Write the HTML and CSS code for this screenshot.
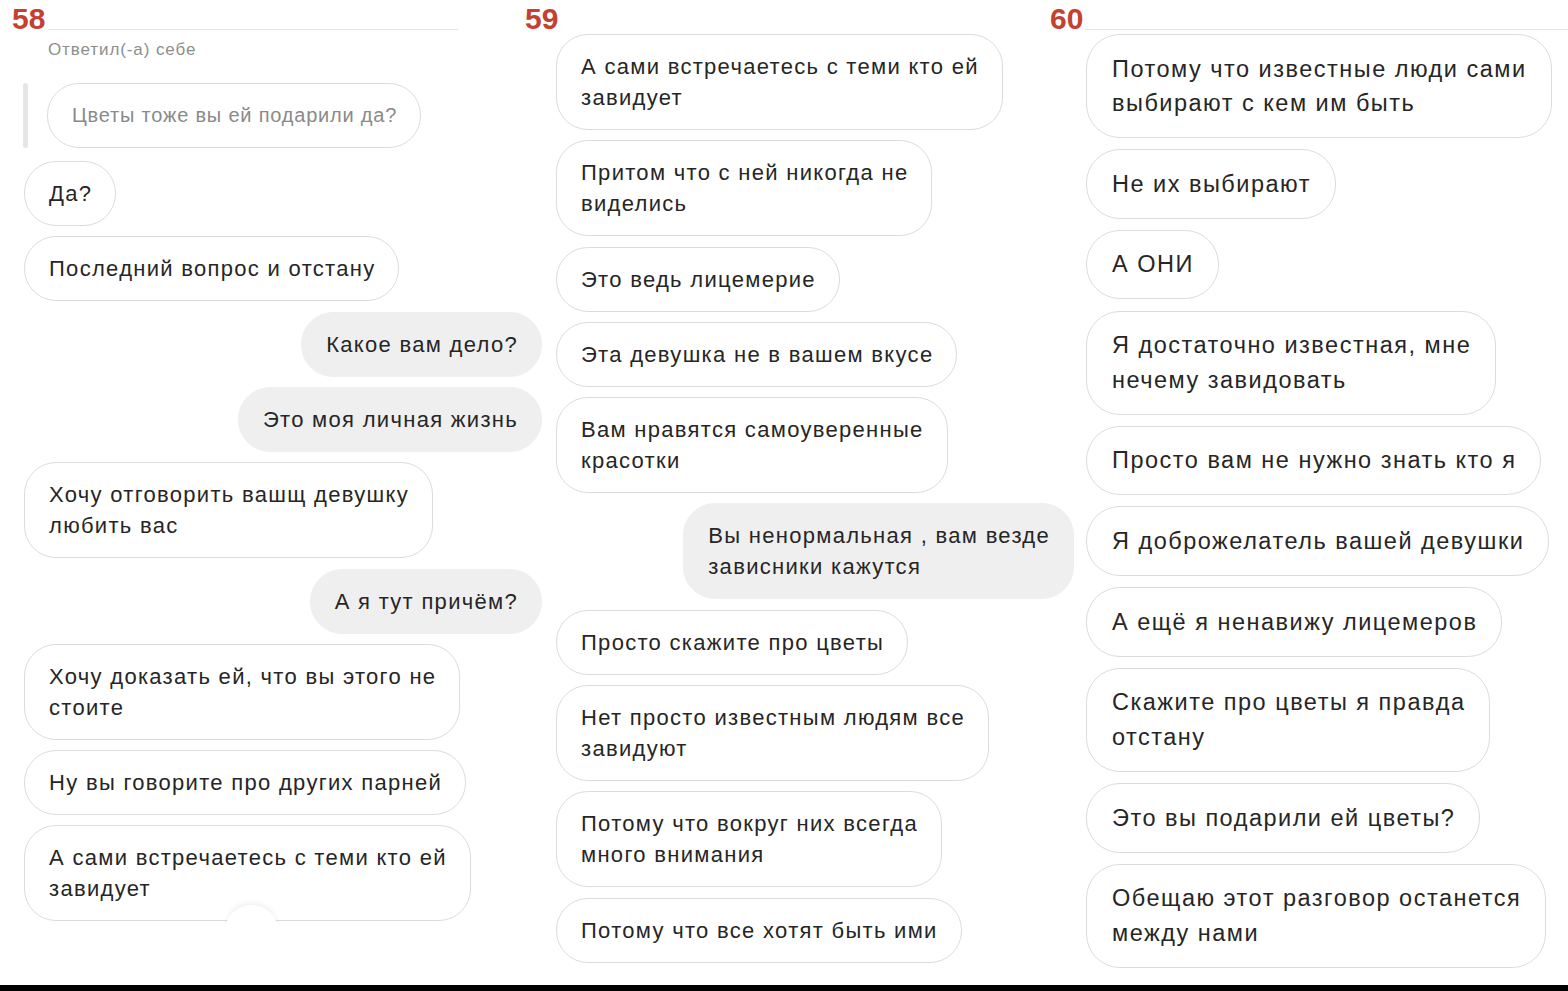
FILE: index.html
```html
<!DOCTYPE html>
<html lang="ru">
<head>
    <meta charset="UTF-8">
    <meta name="viewport" content="width=device-width, initial-scale=1.0">
    <title>Переписка</title>
    <link rel="stylesheet" href="styles.css">
</head>
<body>
    <div id="page">
        <div class="numbers">
            <div class="num-cell">
                <span class="num">58</span>
                <span class="rule rule-short"></span>
            </div>
            <div class="num-cell">
                <span class="num">59</span>
            </div>
            <div class="num-cell">
                <span class="num">60</span>
                <span class="rule rule-long"></span>
            </div>
        </div>

        <div class="shots">
            <div class="thread first">
                <div class="reply-label">Ответил(-а) себе</div>
                <div class="reply">
                    <span class="reply-bar"></span>
                    <div class="bubble quoted">Цветы тоже вы ей подарили да?</div>
                </div>
                <div class="bubble">Да?</div>
                <div class="bubble">Последний вопрос и отстану</div>
                <div class="bubble mine">Какое вам дело?</div>
                <div class="bubble mine">Это моя личная жизнь</div>
                <div class="bubble">Хочу отговорить вашщ девушку<br>любить вас</div>
                <div class="bubble mine">А я тут причём?</div>
                <div class="bubble">Хочу доказать ей, что вы этого не<br>стоите</div>
                <div class="bubble">Ну вы говорите про других парней</div>
                <div class="bubble">А сами встречаетесь с теми кто ей<br>завидует</div>
                <span class="scroll-btn"></span>
            </div>

            <div class="thread second">
                <div class="bubble">А сами встречаетесь с теми кто ей<br>завидует</div>
                <div class="bubble">Притом что с ней никогда не<br>виделись</div>
                <div class="bubble">Это ведь лицемерие</div>
                <div class="bubble">Эта девушка не в вашем вкусе</div>
                <div class="bubble">Вам нравятся самоуверенные<br>красотки</div>
                <div class="bubble mine">Вы ненормальная , вам везде<br>зависники кажутся</div>
                <div class="bubble">Просто скажите про цветы</div>
                <div class="bubble">Нет просто известным людям все<br>завидуют</div>
                <div class="bubble">Потому что вокруг них всегда<br>много внимания</div>
                <div class="bubble">Потому что все хотят быть ими</div>
            </div>

            <div class="thread third">
                <div class="bubble">Потому что известные люди сами<br>выбирают с кем им быть</div>
                <div class="bubble">Не их выбирают</div>
                <div class="bubble">А ОНИ</div>
                <div class="bubble">Я достаточно известная, мне<br>нечему завидовать</div>
                <div class="bubble">Просто вам не нужно знать кто я</div>
                <div class="bubble">Я доброжелатель вашей девушки</div>
                <div class="bubble">А ещё я ненавижу лицемеров</div>
                <div class="bubble">Скажите про цветы я правда<br>отстану</div>
                <div class="bubble">Это вы подарили ей цветы?</div>
                <div class="bubble">Обещаю этот разговор останется<br>между нами</div>
            </div>
        </div>
    </div>
    <div id="bottom-bar"></div>
</body>
</html>
```

FILE: styles.css
```css
body {
    margin: 0;
    padding: 0;
    background-color: #fff;
    color: #262626;
    font-family: "Liberation Sans", Arial, sans-serif;
    overflow: hidden;
}

#page {
    height: 985px;
    overflow: hidden;
}

#bottom-bar {
    height: 6px;
    background-color: #000;
}

.numbers {
    display: grid;
    grid-template-columns: 513px 525px 1fr;
    height: 34px;
}

.num-cell {
    display: flex;
    align-items: flex-start;
    padding-left: 12px;
}

.num {
    font-size: 30px;
    font-weight: bold;
    line-height: 1;
    padding-top: 4px;
    color: #c4412f;
}

.rule {
    height: 29px;
    border-bottom: 1px solid #e4e4e4;
}

.rule-short {
    width: 410px;
    margin-left: 3px;
}

.rule-long {
    flex: 1;
    margin-left: 2px;
}

.shots {
    display: grid;
    grid-template-columns: 546px 532px 1fr;
}

.thread {
    display: flex;
    flex-direction: column;
    align-items: flex-start;
    gap: 10.3px;
    position: relative;
}

.thread.first {
    padding: 0 4px 0 24px;
}

.thread.second {
    padding: 0 4px 0 10px;
}

.thread.third {
    padding: 0 0 0 8px;
    gap: 11.2px;
}

.bubble {
    font-size: 22px;
    letter-spacing: 1.3px;
    line-height: 31px;
    padding: 16px 23px 16px 24px;
    border: 1px solid #dcdcdc;
    border-radius: 32px;
    background-color: #fff;
    white-space: nowrap;
}

.bubble.mine {
    align-self: flex-end;
    border-color: #efefef;
    background-color: #efefef;
}

.third .bubble {
    font-size: 23.5px;
    letter-spacing: 1.5px;
    line-height: 34.5px;
    padding: 16.5px 24px 16.5px 25px;
    border-radius: 34px;
}

.reply-label {
    margin: 4px 0 0 24px;
    font-size: 17px;
    letter-spacing: 0.9px;
    line-height: 24px;
    color: #8e8e8e;
}

.reply {
    display: flex;
    align-items: stretch;
    gap: 19px;
    margin: 11px 0 2.5px -1px;
}

.reply-bar {
    width: 5px;
    border-radius: 3px;
    background-color: #e6e6e6;
}

.bubble.quoted {
    font-size: 20px;
    letter-spacing: 0.8px;
    color: #8a8a8a;
}

.scroll-btn {
    position: absolute;
    left: 225px;
    top: 871px;
    width: 53px;
    height: 26px;
    border-radius: 27px 27px 0 0;
    background-color: #fff;
    box-shadow: 0 -3px 6px -2px rgba(0, 0, 0, 0.08);
}
```
